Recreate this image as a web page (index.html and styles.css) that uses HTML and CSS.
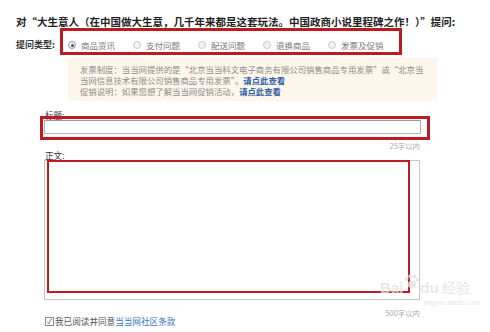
FILE: index.html
```html
<!DOCTYPE html>
<html lang="zh-CN">
<head>
    <meta charset="UTF-8">
    <meta name="viewport" content="width=device-width, initial-scale=1.0">
    <title>提问</title>
    <link rel="stylesheet" href="styles.css">
</head>
<body>
    <div class="page">
        <h1 class="ask-title">对“大生意人（在中国做大生意，几千年来都是这套玩法。中国政商小说里程碑之作！）”提问:</h1>

        <div class="type-row">
            <span class="type-label">提问类型:</span>
            <div class="type-options">
                <label class="option"><span class="radio checked"></span>商品资讯</label>
                <label class="option"><span class="radio"></span>支付问题</label>
                <label class="option"><span class="radio"></span>配送问题</label>
                <label class="option"><span class="radio"></span>退换商品</label>
                <label class="option"><span class="radio"></span>发票及促销</label>
                <div class="mark mark-type"></div>
            </div>
        </div>

        <div class="notice">
            发票制度：当当网提供的是“北京当当科文电子商务有限公司销售商品专用发票”或“北京当<br>
            当网信息技术有限公司销售商品专用发票”。<a href="#">请点此查看</a><br>
            促销说明：如果您想了解当当网促销活动，<a href="#">请点此查看</a>
        </div>

        <div class="field title-field">
            <div class="field-label">标题:</div>
            <input type="text" class="title-input">
            <div class="mark mark-title"></div>
        </div>
        <div class="limit limit-title">25字以内</div>

        <div class="field body-field">
            <div class="field-label">正文:</div>
            <div class="body-box">
                <div class="mark mark-body"></div>
            </div>
        </div>
        <div class="limit limit-body">500字以内</div>

        <div class="agree">
            <span class="checkbox">✓</span>我已阅读并同意<a href="#">当当网社区条款</a>
        </div>

        <div class="watermark">
            <span class="wm-logo">Bai<svg class="paw" viewBox="0 0 20 18" width="17" height="15"><circle cx="4" cy="6" r="2.4"/><circle cx="8.5" cy="2.8" r="2.4"/><circle cx="13.5" cy="3" r="2.4"/><circle cx="17" cy="7" r="2.2"/><ellipse cx="10.5" cy="12.5" rx="5" ry="4.5"/></svg>du</span><span class="wm-cn">经验</span>
            <div class="wm-url">jingyan.baidu.com</div>
        </div>
    </div>
</body>
</html>
```

FILE: styles.css
```css
body {
    margin: 0;
    background-color: #fff;
    font-family: "Noto Sans CJK SC", "Liberation Sans", sans-serif;
    color: #333;
}
.page {
    position: relative;
    width: 490px;
    height: 332px;
    overflow: hidden;
}
.ask-title {
    margin: 15px 0 0 16px;
    font-size: 10.5px;
    line-height: 13px;
    font-weight: bold;
    color: #222;
    white-space: nowrap;
}
.type-row {
    display: flex;
    align-items: flex-start;
}
.type-label {
    margin: 11px 0 0 16px;
    width: 47px;
    font-size: 9px;
    line-height: 12px;
    font-weight: bold;
    color: #333;
}
.type-options {
    position: relative;
    display: flex;
    gap: 18px;
    padding: 11px 0 4px 5px;
}
.option {
    display: flex;
    align-items: center;
    gap: 5px;
    font-size: 8.5px;
    line-height: 12px;
    color: #777;
}
.radio {
    width: 6px;
    height: 6px;
    border: 1px solid #c8c8c8;
    border-radius: 50%;
    background: #f4f4f4;
    position: relative;
}
.radio.checked {
    border-color: #8a9bb0;
}
.radio.checked::after {
    content: "";
    position: absolute;
    left: 1.5px;
    top: 1.5px;
    width: 3px;
    height: 3px;
    border-radius: 50%;
    background: #3d5670;
}
.mark {
    position: absolute;
    border: 3px solid #bd1b22;
    box-sizing: border-box;
}
.mark-type {
    left: -3px;
    top: 0;
    width: 342px;
    height: 27px;
}
.notice {
    margin: 3px 0 0 68px;
    width: 369px;
    box-sizing: border-box;
    padding: 6px 0 4px 12px;
    background: #fdf6ea;
    font-size: 8.4px;
    line-height: 11px;
    color: #8c8c8c;
    white-space: nowrap;
}
.notice a {
    color: #2f5fa5;
    font-weight: bold;
    text-decoration: none;
}
.field {
    position: relative;
    margin-left: 44px;
}
.title-field {
    margin-top: 9px;
}
.field-label {
    padding-left: 1px;
    font-size: 8.6px;
    line-height: 10px;
    color: #333;
}
.title-input {
    display: block;
    margin: 0;
    padding: 0;
    width: 377px;
    height: 14px;
    box-sizing: border-box;
    border: 1px solid #b4b4b4;
    border-top-color: #999;
    background: #fff;
}
.mark-title {
    left: -4px;
    top: 6px;
    width: 390px;
    height: 24px;
}
.limit {
    width: 420px;
    text-align: right;
    font-size: 7.4px;
    line-height: 9px;
    color: #aaa;
}
.limit-title {
    margin-top: 7px;
}
.limit-body {
    margin-top: 8px;
}
.body-box {
    position: relative;
    width: 376px;
    height: 140px;
    box-sizing: border-box;
    border: 1px solid #c4c4c4;
    background: #fff;
}
.mark-body {
    left: 2px;
    top: -1px;
    width: 363px;
    height: 133px;
    border-width: 2.5px;
}
.agree {
    display: flex;
    align-items: center;
    margin-left: 45px;
    font-size: 8.6px;
    line-height: 9px;
    color: #555;
}
.agree a {
    color: #3a78c0;
    text-decoration: none;
}
.checkbox {
    width: 7px;
    height: 7px;
    margin-right: 1px;
    border: 1px solid #8a8a8a;
    font-size: 7px;
    line-height: 7px;
    text-align: center;
    color: #2d4d78;
}
.watermark {
    position: absolute;
    left: 380px;
    top: 274px;
    color: #e2e2e2;
    opacity: 0.8;
}
.wm-logo {
    font-family: "Liberation Sans", sans-serif;
    font-size: 15px;
    font-weight: bold;
    display: inline-flex;
    align-items: flex-end;
}
.paw {
    fill: #e2e2e2;
    margin-bottom: 7px;
}
.wm-cn {
    margin-left: 3px;
    font-size: 14px;
}
.wm-url {
    margin: 0 0 0 44px;
    font-family: "Liberation Sans", sans-serif;
    font-size: 7px;
    line-height: 9px;
}
```
